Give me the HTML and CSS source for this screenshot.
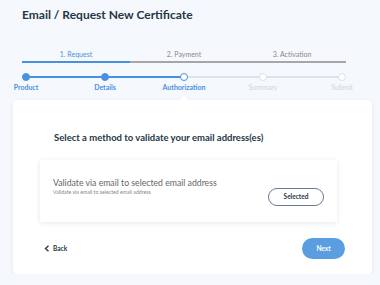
FILE: index.html
```html
<!DOCTYPE html>
<html lang="en">
<head>
  <meta charset="UTF-8">
  <meta name="viewport" content="width=device-width, initial-scale=1.0">
  <title>Email / Request New Certificate</title>
  <link rel="stylesheet" href="styles.css">
</head>
<body>

  <h1 class="page-title">Email / Request New Certificate</h1>

  <!-- Stage tabs -->
  <div class="stages">
    <div class="stage active">1. Request</div>
    <div class="stage">2. Payment</div>
    <div class="stage">3. Activation</div>
  </div>

  <!-- Step progress -->
  <div class="steps">
    <div class="step done"><span class="dot"></span><span class="label">Product</span></div>
    <div class="step done"><span class="dot"></span><span class="label">Details</span></div>
    <div class="step current"><span class="dot"></span><span class="label">Authorization</span></div>
    <div class="step"><span class="dot"></span><span class="label">Summary</span></div>
    <div class="step"><span class="dot"></span><span class="label">Submit</span></div>
  </div>

  <section class="card">
    <h2 class="card-title">Select a method to validate your email address(es)</h2>

    <div class="option">
      <div class="option-text">
        <div class="option-name">Validate via email to selected email address</div>
        <div class="option-desc">Validate via email to selected email address</div>
      </div>
      <button class="btn-outline">Selected</button>
    </div>

    <div class="actions">
      <button class="btn-back">
        <svg width="6" height="7" viewBox="0 0 6 7"><path d="M4.5 0.8 L1.5 3.5 L4.5 6.2" fill="none" stroke="#2b3a4a" stroke-width="1.4"/></svg>
        Back
      </button>
      <button class="btn-next">Next</button>
    </div>
  </section>

</body>
</html>
```

FILE: styles.css
```css
/* Variables */
:root {
  --blue: #4a90e2;
  --blue-btn: #5a9de0;
  --navy: #253746;
  --gray-line: #a6a6a6;
  --gray-light: #dde2e8;
  --bg-color: #f5f8fc;
}

/* General */
body {
  margin: 0;
  background-color: var(--bg-color);
  font-family: 'Lato', sans-serif;
  color: var(--navy);
}

.page-title {
  margin: 0;
  padding: 7px 0 0 22px;
  font-size: 12px;
  font-weight: 700;
  line-height: 16px;
}

/* Stage tabs */
.stages {
  display: flex;
  margin: 26px 0 0 22px;
}

.stage {
  width: 108px;
  text-align: center;
  font-size: 7px;
  color: #8a8a8a;
  line-height: 10px;
  padding-bottom: 2px;
  border-bottom: 2px solid var(--gray-line);
}

.stage.active {
  color: var(--blue);
  border-bottom-color: var(--blue);
}

/* Steps */
.steps {
  display: grid;
  grid-template-columns: repeat(5, 50px);
  column-gap: 29px;
  margin: 10px 0 0 1px;
}

.step {
  position: relative;
  display: flex;
  flex-direction: column;
  align-items: center;
}

.step + .step::before {
  content: '';
  position: absolute;
  top: 3px;
  right: 25px;
  width: 79px;
  height: 2px;
  background-color: var(--gray-light);
}

.step.done::before,
.step.current::before {
  background-color: var(--blue);
}

.dot {
  position: relative;
  z-index: 1;
  box-sizing: border-box;
  width: 8px;
  height: 8px;
  border-radius: 50%;
  border: 1.5px solid var(--gray-light);
  background-color: #fff;
}

.step.done .dot {
  background-color: var(--blue);
  border-color: var(--blue);
}

.step.current .dot {
  border-color: var(--blue);
}

.label {
  margin-top: 2px;
  font-size: 7px;
  line-height: 9px;
  color: #d0d4d8;
}

.step.done .label,
.step.current .label {
  color: var(--blue);
  font-weight: 700;
}

/* Card */
.card {
  position: relative;
  margin: 8px 8px 0 13px;
  padding: 31px 35px 15px 27px;
  background-color: #fff;
  border-radius: 4px;
  box-shadow: 0 1px 4px rgba(40, 60, 90, 0.08);
}

.card::before {
  content: '';
  position: absolute;
  top: -4px;
  left: 166px;
  border-left: 5px solid transparent;
  border-right: 5px solid transparent;
  border-bottom: 5px solid #fff;
}

.card-title {
  margin: 0 0 0 14px;
  font-size: 9.5px;
  font-weight: 700;
  line-height: 14px;
}

.option {
  display: flex;
  align-items: center;
  justify-content: space-between;
  margin-top: 15px;
  height: 62px;
  padding: 0 13px;
  box-shadow: 0 1px 5px rgba(40, 60, 90, 0.12);
}

.option-text {
  margin-top: -12px;
}

.option-name {
  font-size: 8.7px;
  line-height: 13px;
  color: #666;
}

.option-desc {
  font-size: 5.2px;
  line-height: 6px;
  color: #888;
}

.btn-outline {
  margin-top: 11px;
  width: 56px;
  height: 18px;
  border: 1px solid #6b7a8c;
  border-radius: 9px;
  background-color: #fff;
  font-family: inherit;
  font-size: 6.5px;
  font-weight: 700;
  color: var(--navy);
  cursor: pointer;
}

.actions {
  display: flex;
  align-items: center;
  justify-content: space-between;
  margin: 16px -8px 0 0;
  padding-left: 4px;
}

.btn-back {
  display: flex;
  align-items: center;
  gap: 3px;
  border: none;
  background: none;
  padding: 0;
  font-family: inherit;
  font-size: 6.5px;
  font-weight: 700;
  color: var(--navy);
  cursor: pointer;
}

.btn-next {
  width: 43px;
  height: 21px;
  border: none;
  border-radius: 11px;
  background-color: var(--blue-btn);
  color: #fff;
  font-family: inherit;
  font-size: 6.5px;
  font-weight: 700;
  cursor: pointer;
}
```
